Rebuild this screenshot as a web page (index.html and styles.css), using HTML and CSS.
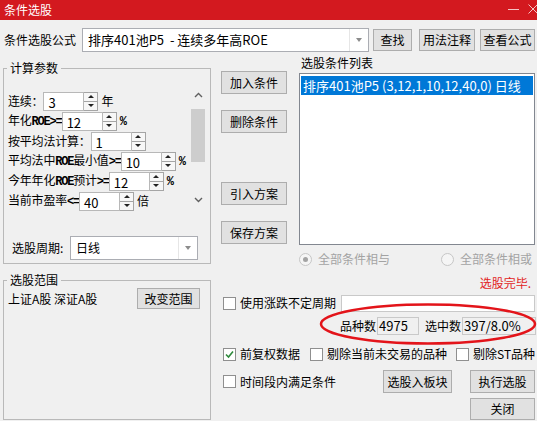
FILE: index.html
```html
<!DOCTYPE html>
<html lang="zh-CN">
<head>
  <meta charset="UTF-8">
  <title>条件选股</title>
  <link rel="stylesheet" href="styles.css">
</head>
<body>
<div class="window">
  <!-- 标题栏 -->
  <div class="titlebar">
    <span class="title">条件选股</span>
    <svg class="win-ctrl" width="33" height="20" viewBox="0 0 33 20">
      <line x1="4" y1="9.5" x2="15" y2="9.5" stroke="#f4c4c4" stroke-width="1"/>
      <path d="M24.5 4.5 L33.5 13.5 M33.5 4.5 L24.5 13.5" stroke="#f4c4c4" stroke-width="1" fill="none"/>
    </svg>
  </div>

  <!-- 公式选择 -->
  <div class="toolbar">
    <span class="lbl">条件选股公式</span>
    <div class="combo formula">
      <span class="combo-text">排序401池P5&nbsp;&nbsp;- 连续多年高ROE</span>
      <span class="combo-arrow"></span>
    </div>
    <button class="btn find">查找</button>
    <button class="btn usage">用法注释</button>
    <button class="btn view">查看公式</button>
  </div>

  <div class="main">
    <div class="left">
      <fieldset class="group params">
        <legend>计算参数</legend>
        <div class="param-view">
          <div class="param-rows">
            <div class="prow"><span class="plbl">连续：</span><span class="spin"><span class="spin-val">3</span><span class="spin-btns"><i class="up"></i><i class="dn"></i></span></span><span class="unit">年</span></div>
            <div class="prow"><span class="plbl">年化<span class="en">ROE&gt;=</span></span><span class="spin"><span class="spin-val">12</span><span class="spin-btns"><i class="up"></i><i class="dn"></i></span></span><span class="unit"><span class="en">%</span></span></div>
            <div class="prow"><span class="plbl">按平均法计算：</span><span class="spin"><span class="spin-val">1</span><span class="spin-btns"><i class="up"></i><i class="dn"></i></span></span></div>
            <div class="prow"><span class="plbl">平均法中<span class="en">ROE</span>最小值<span class="en">&gt;=</span></span><span class="spin"><span class="spin-val">10</span><span class="spin-btns"><i class="up"></i><i class="dn"></i></span></span><span class="unit"><span class="en">%</span></span></div>
            <div class="prow"><span class="plbl">今年年化<span class="en">ROE</span>预计<span class="en">&gt;=</span></span><span class="spin"><span class="spin-val">12</span><span class="spin-btns"><i class="up"></i><i class="dn"></i></span></span><span class="unit"><span class="en">%</span></span></div>
            <div class="prow"><span class="plbl">当前市盈率<span class="en">&lt;=</span></span><span class="spin"><span class="spin-val">40</span><span class="spin-btns"><i class="up"></i><i class="dn"></i></span></span><span class="unit">倍</span></div>
          </div>
          <div class="vscroll">
            <span class="vs-btn"><svg width="9" height="6" viewBox="0 0 9 6"><polyline points="1,5 4.5,1.5 8,5" fill="none" stroke="#606060" stroke-width="1.4"/></svg></span>
            <span class="vs-thumb"></span>
            <span class="vs-btn down"><svg width="9" height="6" viewBox="0 0 9 6"><polyline points="1,1 4.5,4.5 8,1" fill="none" stroke="#606060" stroke-width="1.4"/></svg></span>
          </div>
        </div>
        <div class="period">
          <span class="lbl">选股周期:</span>
          <div class="combo period-combo">
            <span class="combo-text">日线</span>
            <span class="combo-arrow"></span>
          </div>
        </div>
      </fieldset>

      <fieldset class="group scope">
        <legend>选股范围</legend>
        <div class="scope-body">
          <div class="scope-row">
            <span>上证A股 深证A股</span>
            <button class="btn scope-btn">改变范围</button>
          </div>
        </div>
      </fieldset>
    </div>

    <div class="right">
      <div class="top">
        <div class="ops">
          <button class="btn">加入条件</button>
          <button class="btn near">删除条件</button>
          <button class="btn far">引入方案</button>
          <button class="btn near">保存方案</button>
        </div>
        <div class="cond">
          <div class="cond-title">选股条件列表</div>
          <div class="cond-list">
            <div class="cond-item">排序401池P5 (3,12,1,10,12,40,0) 日线</div>
          </div>
        </div>
      </div>

      <div class="radios">
        <span class="radio r1"><span class="dot on"></span>全部条件相与</span>
        <span class="radio"><span class="dot"></span>全部条件相或</span>
      </div>

      <div class="status">选股完毕.</div>

      <div class="line line1">
        <span class="cb"></span>
        <span>使用涨跌不定周期</span>
        <span class="text-input"></span>
      </div>

      <div class="counts">
        <span>品种数</span>
        <span class="count-box n1">4975</span>
        <span class="lbl2">选中数</span>
        <span class="count-box n2">397/8.0%</span>
      </div>

      <div class="line line2">
        <span class="item i1"><span class="cb checked"><svg width="11" height="11" viewBox="0 0 11 11"><polyline points="2,5.5 4.5,8 9,2.5" fill="none" stroke="#2f8a3c" stroke-width="1.6"/></svg></span>前复权数据</span>
        <span class="item i2"><span class="cb"></span>剔除当前未交易的品种</span>
        <span class="item"><span class="cb"></span>剔除ST品种</span>
      </div>

      <div class="line line3">
        <span class="cb"></span>
        <span>时间段内满足条件</span>
        <button class="btn to-block">选股入板块</button>
        <button class="btn run">执行选股</button>
      </div>

      <div class="line line4">
        <button class="btn close">关闭</button>
      </div>
    </div>
  </div>

  <!-- 红色圈注 -->
  <svg class="mark" width="220" height="46" viewBox="0 0 220 46">
    <ellipse cx="110" cy="22" rx="107" ry="19.5" fill="none" stroke="#e3141a" stroke-width="2.5"/>
  </svg>
</div>
</body>
</html>
```

FILE: styles.css
```css
*{margin: 0;padding: 0;box-sizing: border-box;}
body{
  background: #f0f0f0;
  font-family: "Noto Sans CJK SC", "Microsoft YaHei", sans-serif;
  font-size: 12px;
  line-height: 16px;
  color: #000;
}
.window{
  position: relative;
  width: 537px;
  height: 421px;
  overflow: hidden;
  background: #f0f0f0;
}

/* 标题栏 */
.titlebar{
  height: 20px;
  background: #d3191f;
  color: #fff;
  display: flex;
  align-items: center;
  justify-content: space-between;
  padding-left: 4px;
}
.title{line-height: 20px;}

/* 按钮 */
.btn{
  font: inherit;
  font-size: 12px;
  line-height: 16px;
  color: #000;
  background: #e1e1e1;
  border: 1px solid #adadad;
  height: 22px;
}

/* 下拉框 */
.combo{
  display: flex;
  background: #fff;
  border: 1px solid #abadb3;
}
.combo-text{
  flex: 1;
  padding-left: 5px;
  line-height: 22px;
  white-space: nowrap;
  overflow: hidden;
}
.combo-arrow{
  width: 19px;
  border-left: 1px solid #e6e6e6;
  display: flex;
  align-items: center;
  justify-content: center;
}
.combo-arrow::after{
  content: '';
  border-left: 3px solid transparent;
  border-right: 3px solid transparent;
  border-top: 4px solid #8c8c8c;
}

/* 公式行 */
.toolbar{
  display: flex;
  align-items: center;
  height: 24px;
  margin-top: 8px;
  padding-left: 4px;
}
.toolbar .lbl{width: 78px;}
.formula{width: 287px;height: 24px;}
.formula .combo-text{font-size: 13px;}
.find{width: 39px;margin-left: 4px;}
.usage{width: 56px;margin-left: 7px;}
.view{width: 55px;margin-left: 5px;}

.main{display: flex;}

/* 左侧分组 */
.left{width: 208px;margin-left: 3px;}
.group{border: 1px solid #b9b9b9;}
.group legend{
  margin-left: 3px;
  padding: 0 3px;
  line-height: 14px;
}
.params{margin-top: 9px;}
.param-view{
  display: flex;
  height: 127px;
  margin: 9px 4px 0 0;
}
.param-rows{
  flex: 1;
  padding: 7px 0 0 4px;
  overflow: hidden;
}
.prow{
  display: flex;
  align-items: center;
  height: 20px;
  white-space: nowrap;
}
.plbl{letter-spacing: -0.2px;}
.en{
  font-family: "Liberation Mono", monospace;
  font-size: 12px;
  font-weight: bold;
  letter-spacing: -1.2px;
}
.unit{margin-left: 3px;}

/* 微调框 */
.spin{display: flex;height: 19px;}
.spin-val{
  width: 41px;
  background: #fff;
  border: 1px solid #b8b8b8;
  padding: 2px 0 0 4px;
  font-size: 13px;
  line-height: 16px;
}
.spin-btns{
  width: 14px;
  display: flex;
  flex-direction: column;
  border: 1px solid #a5a5a5;
  border-left: 0;
  background: #f7f7f7;
}
.spin-btns i{
  flex: 1;
  display: flex;
  align-items: center;
  justify-content: center;
}
.spin-btns i + i{border-top: 1px solid #a5a5a5;}
.spin-btns .up::after{
  content: '';
  border-left: 3px solid transparent;
  border-right: 3px solid transparent;
  border-bottom: 3px solid #222;
}
.spin-btns .dn::after{
  content: '';
  border-left: 3px solid transparent;
  border-right: 3px solid transparent;
  border-top: 3px solid #222;
}

/* 滚动条 */
.vscroll{
  width: 16px;
  display: flex;
  flex-direction: column;
  align-items: center;
}
.vs-btn{
  height: 22px;
  display: flex;
  align-items: center;
  justify-content: center;
}
.vs-thumb{
  width: 14px;
  height: 53px;
  margin-top: 3px;
  background: #cdcdcd;
}
.vs-btn.down{margin-top: auto;}

.period{
  display: flex;
  align-items: center;
  margin-top: 25px;
  padding: 0 0 3px 8px;
}
.period .lbl{width: 58px;}
.period-combo{width: 128px;height: 24px;}

.scope{margin-top: 9px;}
.scope-body{
  height: 132px;
  padding: 1px 0 0 4px;
}
.scope-row{
  display: flex;
  align-items: center;
  height: 21px;
}
.scope-btn{
  width: 63px;
  height: 21px;
  margin-left: auto;
  margin-right: 10px;
}

/* 右侧 */
.right{width: 316px;margin-left: 10px;}
.top{display: flex;height: 193px;}
.ops{
  width: 66px;
  padding-top: 19px;
  display: flex;
  flex-direction: column;
}
.ops .btn{width: 66px;height: 23px;}
.ops .near{margin-top: 16px;}
.ops .far{margin-top: 49px;}
.cond{width: 236px;margin-left: 12px;}
.cond-title{margin-top: 3px;padding-left: 2px;}
.cond-list{
  margin-top: 2px;
  height: 172px;
  background: #fff;
  border: 1px solid #828790;
  padding: 2px 1px;
}
.cond-item{
  height: 19px;
  line-height: 19px;
  padding-left: 2px;
  background: #0078d7;
  color: #fff;
  font-size: 13px;
  white-space: nowrap;
  overflow: hidden;
}

/* 单选 */
.radios{
  display: flex;
  align-items: center;
  height: 16px;
  margin-top: 6px;
  padding-left: 78px;
  color: #a3a3a3;
}
.radio{display: flex;align-items: center;gap: 6px;}
.r1{width: 142px;}
.dot{
  width: 13px;
  height: 13px;
  border-radius: 50%;
  border: 1px solid #c6c6c6;
  background: #f5f5f5;
  display: flex;
  align-items: center;
  justify-content: center;
}
.dot.on::after{
  content: '';
  width: 5px;
  height: 5px;
  border-radius: 50%;
  background: #a3a3a3;
}

.status{
  margin-top: 8px;
  padding-right: 6px;
  text-align: right;
  color: #e21d1d;
}

/* 复选行 */
.line{display: flex;align-items: center;}
.cb{
  width: 13px;
  height: 13px;
  border: 1px solid #8f8f8f;
  background: #fff;
  margin: 0 4px 0 2px;
  display: inline-flex;
  align-items: center;
  justify-content: center;
  flex: none;
}
.line1{height: 18px;margin-top: 3px;}
.text-input{
  width: 194px;
  height: 17px;
  margin-left: auto;
  margin-right: 2px;
  background: #fff;
  border: 1px solid #c9c9c9;
}

.counts{
  display: flex;
  align-items: center;
  height: 18px;
  margin-top: 5px;
  padding-left: 119px;
  white-space: nowrap;
}
.count-box{
  height: 18px;
  border: 1px solid #c9c9c9;
  padding-left: 1px;
  font-size: 13px;
  line-height: 16px;
  margin-left: 1px;
}
.n1{width: 42px;}
.n2{width: 74px;}
.lbl2{margin-left: 6px;}

.line2{height: 18px;margin-top: 10px;}
.item{display: flex;align-items: center;white-space: nowrap;}
.i1{width: 87px;}
.i2{width: 146px;}

.line3{height: 23px;margin-top: 7px;}
.to-block{width: 69px;height: 23px;margin-left: auto;}
.run{width: 65px;height: 23px;margin: 0 2px 0 18px;}

.line4{height: 22px;margin-top: 5px;}
.close{width: 65px;margin: 0 2px 0 auto;}

/* 圈注 */
.mark{
  position: absolute;
  left: 318px;
  top: 302px;
}
```
